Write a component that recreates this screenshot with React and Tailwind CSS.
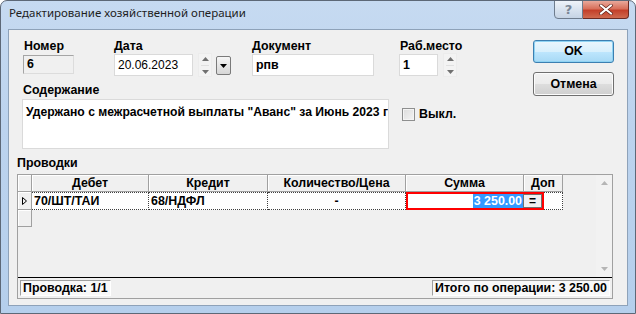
import React from "react";

const Label = ({ children, className = "" }) => (
  <div className={`h-[15px] leading-[15px] text-[12.4px] font-bold text-black whitespace-nowrap ${className}`}>
    {children}
  </div>
);

const Up = () => (
  <svg width="7" height="4" viewBox="0 0 7 4">
    <path d="M3.5 0L7 4H0z" fill="#707070" />
  </svg>
);
const Down = () => (
  <svg width="7" height="4" viewBox="0 0 7 4">
    <path d="M0 0H7L3.5 4z" fill="#707070" />
  </svg>
);

const Spin = ({ className = "" }) => (
  <div className={`w-[14px] h-[24px] flex flex-col items-center justify-center gap-[4px] border border-[#ececec] bg-[#f3f3f3] ${className}`}>
    <Up />
    <div className="w-[8px] h-px bg-[#e0e0e0]" />
    <Down />
  </div>
);

const Head = ({ w, children }) => (
  <div
    className={`${w} h-full flex items-center justify-center border-r border-b border-[#a0a0a0] bg-[#f0f0f0] shadow-[inset_1px_1px_0_#ffffff] text-[12.4px] font-bold`}
  >
    {children}
  </div>
);

const Cell = ({ w, children, className = "" }) => (
  <div
    className={`${w} h-full flex items-center px-[2px] bg-white border-r border-[#404040] border-t border-b border-dotted text-[12.4px] font-bold whitespace-nowrap ${className}`}
  >
    {children}
  </div>
);

export default function App() {
  return (
    <div className="w-[636px] h-[314px] flex flex-col px-[7px] pb-[7px] bg-[linear-gradient(180deg,#c6daf1_0%,#bcd3ee_40%,#b5cfec_100%)] border border-[#5d6877] rounded-t-[7px] overflow-hidden font-['Liberation_Sans',Arial,sans-serif] text-black">
      {/* title bar */}
      <div className="h-[28px] flex items-start justify-between shrink-0">
        <div className="pt-[5px] pl-[1px] text-[11.5px] leading-[14px] text-[#1e1e1e] font-['Noto_Sans',sans-serif]">
          Редактирование хозяйственной операции
        </div>
        <div className="flex mr-[-1px] mt-[-1px]">
          <div className="w-[29px] h-[19px] flex items-center justify-center rounded-bl-[4px] border border-[#6e7c8d] bg-[linear-gradient(180deg,#eef3f9_0%,#d9e3ef_50%,#c5d3e4_100%)] text-[13px] font-bold text-[#7b8796] font-['DejaVu_Sans',sans-serif]">
            ?
          </div>
          <div className="w-[46px] h-[19px] flex items-center justify-center rounded-br-[4px] border border-l-0 border-[#6b2a22] bg-[linear-gradient(180deg,#e9a99b_0%,#d8705b_45%,#c3402a_55%,#cf6a4f_100%)]">
            <svg width="14" height="11" viewBox="0 0 14 11">
              <path d="M2 1.5L12 9.5M12 1.5L2 9.5" stroke="#5a1d14" strokeWidth="3.4" strokeLinecap="square" />
              <path d="M2 1.5L12 9.5M12 1.5L2 9.5" stroke="#ffffff" strokeWidth="2" strokeLinecap="square" />
            </svg>
          </div>
        </div>
      </div>

      {/* client area */}
      <div className="flex-1 flex flex-col border border-[#8ea2b9] bg-[#f0f0f0]">
        <div className="flex">
          <div className="flex flex-col">
            {/* fields row */}
            <div className="flex items-start pt-[9px] pl-[14px]">
              <div className="w-[51px] flex flex-col">
                <Label className="pl-px">Номер</Label>
                <div className="mt-[1px] h-[19px] flex items-center pl-[3px] border border-[#a5a5a5] border-r-[#dcdcdc] border-b-[#dcdcdc] bg-[#f0f0f0] text-[12.4px] font-bold">
                  6
                </div>
              </div>
              <div className="ml-[40px] w-[79px] flex flex-col">
                <Label>Дата</Label>
                <div className="h-[22px] flex items-center pl-[3px] border border-[#dadada] bg-white text-[12px]">
                  20.06.2023
                </div>
              </div>
              <Spin className="ml-[5px] mt-[14px]" />
              <div className="ml-[4px] mt-[17px] w-[15px] h-[19px] flex items-center justify-center rounded-[2px] border border-[#7a7a7a] bg-[linear-gradient(180deg,#f6f6f6_0%,#e6e6e6_50%,#d6d6d6_100%)]">
                <svg width="7" height="4" viewBox="0 0 7 4">
                  <path d="M0 0H7L3.5 4z" fill="#000" />
                </svg>
              </div>
              <div className="ml-[21px] w-[122px] flex flex-col">
                <Label>Документ</Label>
                <div className="h-[22px] flex items-center pl-[3px] border border-[#dadada] bg-white text-[12.4px] font-bold">
                  рпв
                </div>
              </div>
              <div className="ml-[25px] w-[39px] flex flex-col">
                <Label className="pl-px">Раб.место</Label>
                <div className="h-[22px] flex items-center pl-[3px] border border-[#dadada] bg-white text-[12.4px] font-bold">
                  1
                </div>
              </div>
              <Spin className="ml-[5px] mt-[14px]" />
            </div>

            {/* content */}
            <Label className="mt-[6px] ml-[14px]">Содержание</Label>
            <div className="flex items-start mt-[1px] ml-[13px]">
              <div className="w-[367px] h-[50px] pl-[3px] pt-[5px] border border-[#dadada] bg-white overflow-hidden whitespace-nowrap text-[12.15px] leading-[14px] font-bold">
                Удержано с межрасчетной выплаты "Аванс" за Июнь 2023 г
              </div>
              <div className="ml-[13px] mt-[6px] flex items-center">
                <div className="w-[13px] h-[13px] border border-[#8e8f8f] bg-[linear-gradient(135deg,#dcdcdc_0%,#f4f4f4_100%)] shadow-[inset_0_0_0_1px_#f4f4f4]" />
                <span className="ml-[4px] text-[12.4px] font-bold">Выкл.</span>
              </div>
            </div>
          </div>

          {/* buttons */}
          <div className="ml-auto mr-[13px] pt-[10px] flex flex-col">
            <div className="w-[81px] h-[23px] flex items-center justify-center rounded-[3px] border border-[#3c7fb1] bg-[linear-gradient(180deg,#eaf6fd_0%,#d9f0fc_50%,#bee6fd_51%,#a7d9f5_100%)] shadow-[inset_0_0_0_1px_#8fd3f3] text-[12.4px] font-bold">
              OK
            </div>
            <div className="mt-[9px] w-[81px] h-[24px] flex items-center justify-center rounded-[3px] border border-[#707070] bg-[linear-gradient(180deg,#f2f2f2_0%,#ebebeb_50%,#dddddd_51%,#cfcfcf_100%)] shadow-[inset_0_0_0_1px_#fcfcfc] text-[12.4px] font-bold">
              Отмена
            </div>
          </div>
        </div>

        <Label className="mt-[7px] ml-[8px]">Проводки</Label>

        {/* grid panel */}
        <div className="mt-[3px] ml-[8px] w-[596px] h-[125px] flex flex-col border border-[#a0a0a0]">
          <div className="flex-1 flex border-b border-black">
            <div className="flex-1 flex flex-col relative">
              <div className="h-[17px] flex">
                <Head w="w-[14px]" />
                <Head w="w-[117px]">Дебет</Head>
                <Head w="w-[119px]">Кредит</Head>
                <Head w="w-[138px]">Количество/Цена</Head>
                <Head w="w-[118px]">Сумма</Head>
                <Head w="w-[39px]">Доп</Head>
              </div>
              <div className="h-[18px] flex">
                <div className="w-[14px] h-full flex items-center justify-center border-r border-b border-[#a0a0a0] bg-[#f0f0f0] shadow-[inset_1px_1px_0_#ffffff]">
                  <svg width="5" height="8" viewBox="0 0 5 8">
                    <path d="M0.5 0.5L4.5 4L0.5 7.5z" fill="none" stroke="#000" strokeWidth="1" />
                  </svg>
                </div>
                <Cell w="w-[117px]">70/ШТ/ТАИ</Cell>
                <Cell w="w-[119px]">68/НДФЛ</Cell>
                <Cell w="w-[138px]" className="justify-center">-</Cell>
                <Cell w="w-[118px]" />
                <Cell w="w-[39px]" />
              </div>
              <div className="w-[14px] h-[17px] border-r border-b border-[#a0a0a0] bg-[#f0f0f0] shadow-[inset_1px_1px_0_#ffffff]" />

              {/* in-place editor */}
              <div className="absolute left-[388px] top-[17px] w-[138px] h-[18px] flex items-center justify-end border-2 border-[#ff0000] bg-white">
                <span className="h-[14px] px-px leading-[14px] bg-[#3399ff] text-white text-[12.4px] font-bold">3 250.00</span>
                <div className="w-[19px] h-[14px] flex items-center justify-center border border-[#707070] bg-[#f0f0f0] text-[12px] font-bold leading-none">
                  =
                </div>
              </div>
            </div>
            {/* scrollbar */}
            <div className="w-[16px] flex flex-col justify-between items-center py-[6px] bg-[#f2f2f2]">
              <svg width="7" height="4" viewBox="0 0 7 4">
                <path d="M3.5 0L7 4H0z" fill="#b5b5b5" />
              </svg>
              <svg width="7" height="4" viewBox="0 0 7 4">
                <path d="M0 0H7L3.5 4z" fill="#b5b5b5" />
              </svg>
            </div>
          </div>
          {/* status bar */}
          <div className="h-[20px] flex items-center justify-between px-[2px]">
            <div className="h-[16px] flex items-center px-[2px] border border-[#a0a0a0] border-r-white border-b-white bg-[#f8f8f8] text-[12.4px] font-bold">
              Проводка: 1/1
            </div>
            <div className="h-[16px] flex items-center px-[2px] border border-[#a0a0a0] border-r-white border-b-white bg-[#f8f8f8] text-[12.4px] font-bold">
              Итого по операции: 3 250.00
            </div>
          </div>
        </div>
      </div>
    </div>
  );
}
